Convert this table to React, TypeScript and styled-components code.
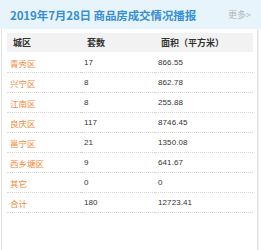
import { createGlobalStyle } from "styled-components";
import styled from "styled-components";

type Row = {
	area: string;
	count: string;
	size: string;
};

const rows: Row[] = [
	{ area: "青秀区", count: "17", size: "866.55" },
	{ area: "兴宁区", count: "8", size: "862.78" },
	{ area: "江南区", count: "8", size: "255.88" },
	{ area: "良庆区", count: "117", size: "8746.45" },
	{ area: "邕宁区", count: "21", size: "1350.08" },
	{ area: "西乡塘区", count: "9", size: "641.67" },
	{ area: "其它", count: "0", size: "0" },
	{ area: "合计", count: "180", size: "12723.41" },
];

const GlobalStyle = createGlobalStyle`
	html, body {
		margin: 0;
		padding: 0;
		background: #fff;
	}
	body {
		font-family: "Noto Sans CJK SC", "Noto Sans", sans-serif;
	}
`;

export default function App() {
	return (
		<>
			<GlobalStyle />
			<Panel>
				<Header>
					<Title>2019年7月28日 商品房成交情况播报</Title>
					<More>更多&gt;</More>
				</Header>
				<Body>
					<Grid>
						<HeadCell>城区</HeadCell>
						<HeadCell>套数</HeadCell>
						<HeadCell>面积（平方米）</HeadCell>
						{rows.map((r) => (
							<DataRow key={r.area}>
								<AreaCell>{r.area}</AreaCell>
								<NumCell>{r.count}</NumCell>
								<NumCell>{r.size}</NumCell>
							</DataRow>
						))}
					</Grid>
				</Body>
			</Panel>
		</>
	);
}

const Panel = styled.div`
	width: 261px;
	height: 250px;
	display: flex;
	flex-direction: column;
`;

const Header = styled.div`
	height: 29px;
	flex: none;
	background: #e8f4fb;
	display: flex;
	align-items: center;
	justify-content: space-between;
	padding: 0 10px 0 10px;
	box-sizing: border-box;
`;

const Title = styled.div`
	font-size: 11.5px;
	font-weight: 700;
	color: #368fd4;
	letter-spacing: -0.1px;
`;

const More = styled.div`
	font-size: 9px;
	color: #b4b4b4;
`;

const Body = styled.div`
	flex: none;
	height: 218px;
	margin: 0 3px 0 1px;
	border: 1px solid #e3e3e3;
	border-top: none;
	box-shadow: 1px 1px 0 #f1f1f1;
	padding: 4px 4px 0 5px;
`;

const Grid = styled.div`
	display: grid;
	grid-template-columns: 74px 74px 1fr;
`;

const HeadCell = styled.div`
	height: 19px;
	margin-bottom: 1px;
	background: #f2f2f2;
	padding-left: 6px;
	display: flex;
	align-items: center;
	font-size: 9px;
	font-weight: 700;
	color: #333;
`;

const DataRow = styled.div`
	display: contents;

	& > div {
		height: 19px;
		border-bottom: 1px dotted #d6d6d6;
		padding-left: 3px;
		display: flex;
		align-items: center;
	}
`;

const AreaCell = styled.div`
	font-size: 8.5px;
	color: #f08a3c;
`;

const NumCell = styled.div`
	font-family: "Liberation Sans", Arial, sans-serif;
	font-size: 8px;
	letter-spacing: 0.1px;
	color: #333;
`;
